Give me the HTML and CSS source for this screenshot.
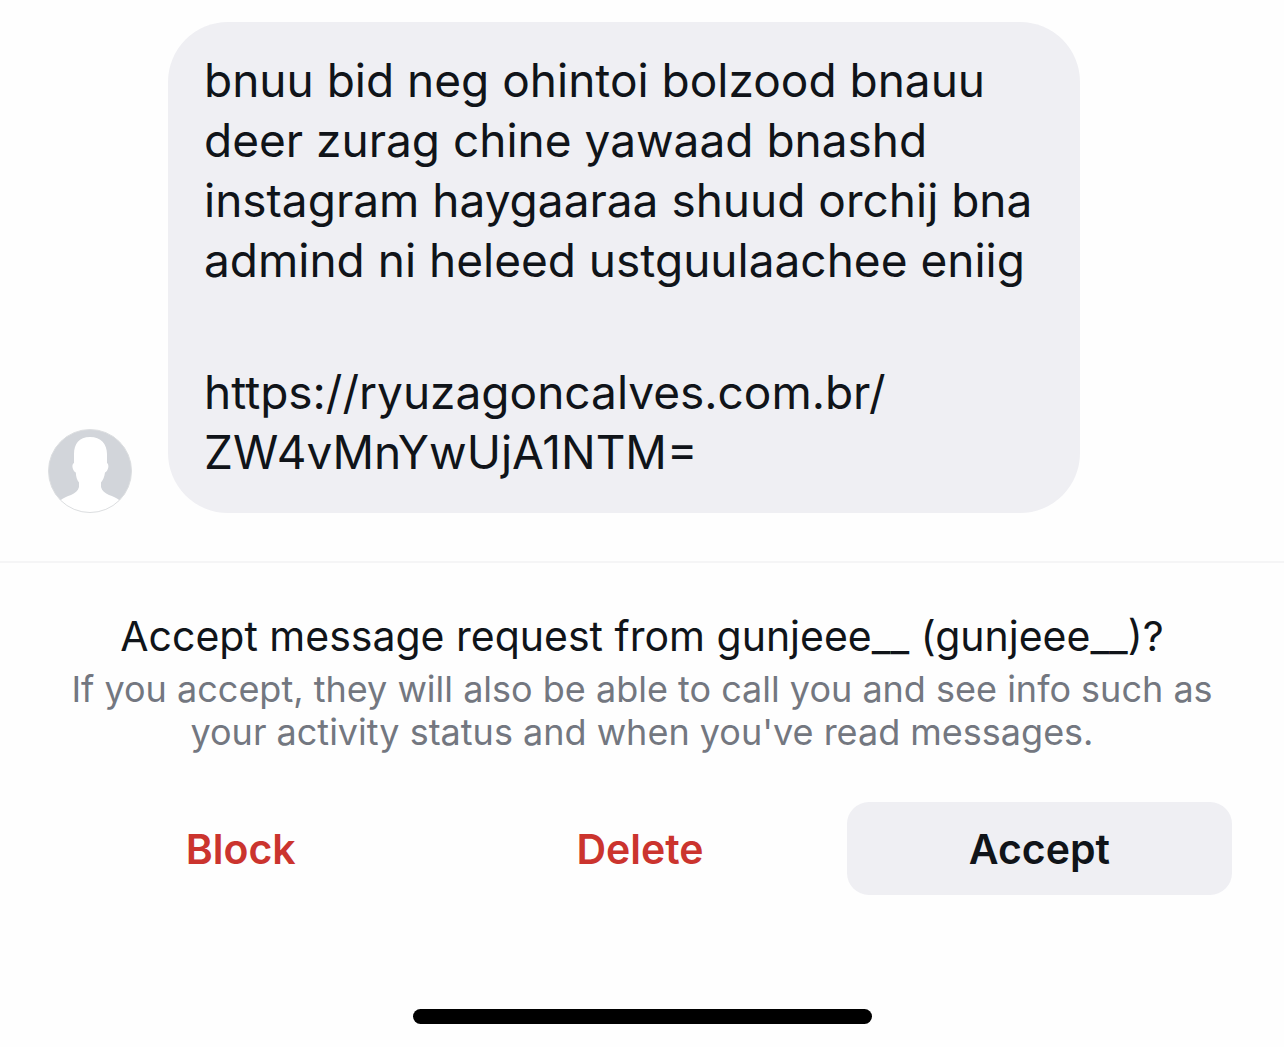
FILE: index.html
```html
<!DOCTYPE html>
<html lang="mn">
<head>
<meta charset="utf-8">
<meta name="viewport" content="width=device-width, initial-scale=1">
<title>Message request</title>
<link rel="stylesheet" href="styles.css">
</head>
<body>
<main class="thread">
  <svg class="avatar" viewBox="0 0 84 84" role="img" aria-label="Profile photo">
    <defs><clipPath id="disc"><circle cx="42" cy="42" r="42"/></clipPath></defs>
    <circle cx="42" cy="42" r="41.5" fill="#d2d5da"/>
    <path clip-path="url(#disc)" fill="#fff" d="M42 8C31 8 26 15 26 25v9c-1.500 1-2 3-1.200 5.500.7 2.500 2 3.500 3 4C28 48 29 51 31 53.500V58c-1 4-4 6-8 8-4 1.500-7 2.500-11.500 6V84h61V72c-4.500-3.500-7.500-4.500-11.500-6-4-2-7-4-8-8v-4.500c2-2.500 3.500-5.500 4-10 1-.5 2.300-1.500 3-4 .8-2.500.3-4.500-1-5.500v-9C59 15 53 8 42 8z"/>
    <circle cx="42" cy="42" r="41.5" fill="none" stroke="#dcdee0"/>
  </svg>
  <div class="bubble">
    <p class="text">bnuu bid neg ohintoi bolzood bnauu<br>deer zurag chine yawaad bnashd<br>instagram haygaaraa shuud orchij bna<br>admind ni heleed ustguulaachee eniig</p>
    <p class="text">https://ryuzagoncalves.com.br/<br>ZW4vMnYwUjA1NTM=</p>
  </div>
</main>
<section class="request">
  <h1 class="title">Accept message request from gunjeee__ (gunjeee__)?</h1>
  <p class="note">If you accept, they will also be able to call you and see info such as<br>your activity status and when you've read messages.</p>
  <div class="actions">
    <button class="action danger" type="button">Block</button>
    <button class="action danger" type="button">Delete</button>
    <button class="action accept" type="button">Accept</button>
  </div>
  <div class="home-bar"></div>
</section>
</body>
</html>
```

FILE: styles.css
```css
* { box-sizing: border-box; }
body {
  margin: 0;
  background: #fefefe;
  color: #101419;
  font-family: Inter, "Liberation Sans", sans-serif;
}
.thread {
  display: flex;
  align-items: flex-end;
  gap: 36px;
  padding: 22px 48px 48px;
}
.avatar { flex: none; width: 84px; height: 84px; }
.bubble {
  display: flex;
  flex-direction: column;
  gap: 72px;
  padding: 28px 36px 31px;
  width: 912px;
  border-radius: 60px;
  background: #efeff3;
}
.text {
  margin: 0;
  font-size: 46px;
  line-height: 60px;
}
.request {
  padding: 49px 0 23px;
  border-top: 2px solid #f5f5f6;
  text-align: center;
}
.title {
  margin: 0;
  font-size: 41px;
  font-weight: 400;
  line-height: 48px;
}
.note {
  margin: 8px 0 0;
  color: #737780;
  font-size: 36px;
  line-height: 43px;
}
.actions {
  display: grid;
  grid-template-columns: repeat(3, 1fr);
  gap: 14px;
  padding: 48px 52px 0 48px;
}
.action {
  height: 93px;
  border: 0;
  border-radius: 22px;
  background: none;
  color: #101419;
  font: 600 41px/48px Inter, "Liberation Sans", sans-serif;
}
.danger { color: #cb342e; }
.accept { background: #efeff3; }
.home-bar {
  width: 459px;
  height: 15px;
  margin: 114px auto 0;
  border-radius: 8px;
  background: #000;
}
```
